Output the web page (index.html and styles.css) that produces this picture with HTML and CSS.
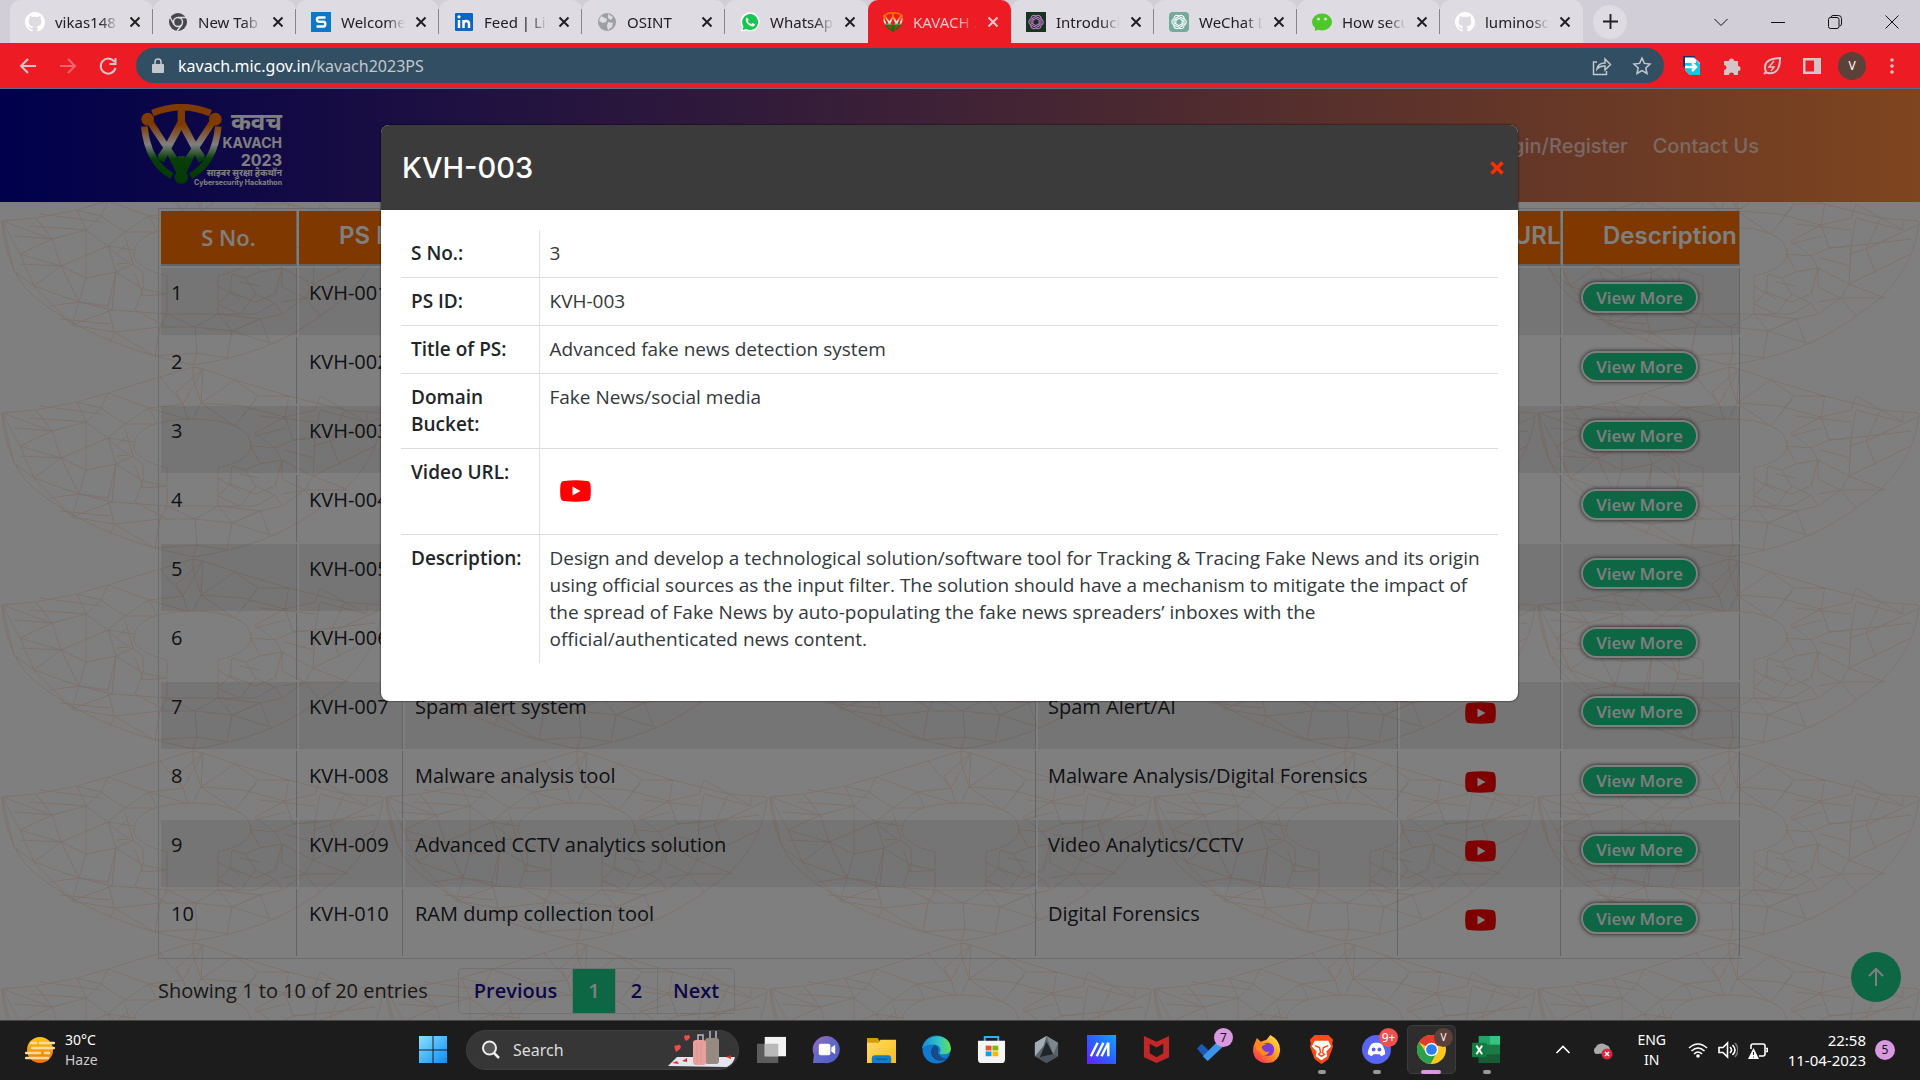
FILE: index.html
```html
<!DOCTYPE html>
<html lang="en">
<head>
<meta charset="utf-8">
<title>KAVACH 2023</title>
<link rel="stylesheet" href="styles.css">
</head>
<body>
<svg class="defs" aria-hidden="true">
  <defs>
    <symbol id="x" viewBox="0 0 12 12"><path d="M1.500 1.500 10.500 10.500M10.500 1.500 1.500 10.500" stroke="currentColor" stroke-width="2" fill="none"/></symbol>
    <symbol id="github" viewBox="0 0 16 16"><path fill="#fff" d="M8 0C3.580 0 0 3.580 0 8c0 3.540 2.290 6.530 5.470 7.590.4.070.55-.17.55-.38 0-.19-.01-.82-.01-1.490-2.010.37-2.530-.49-2.690-.94-.09-.23-.48-.94-.82-1.130-.28-.15-.68-.52-.01-.53.63-.01 1.080.58 1.230.82.72 1.210 1.870.87 2.330.66.070-.52.28-.87.51-1.070-1.780-.2-3.640-.89-3.640-3.950 0-.87.31-1.590.82-2.150-.08-.2-.36-1.020.08-2.120 0 0 .67-.21 2.200.82.64-.18 1.320-.27 2-.27s1.360.09 2 .27c1.530-1.040 2.200-.82 2.200-.82.44 1.100.16 1.920.08 2.120.51.56.82 1.270.82 2.150 0 3.070-1.870 3.750-3.650 3.950.29.25.54.73.54 1.480 0 1.070-.01 1.930-.01 2.200 0 .21.15.46.55.38A8 8 0 0 0 16 8c0-4.420-3.580-8-8-8z"/></symbol>
    <symbol id="knot" viewBox="0 0 20 20"><g fill="none" stroke="currentColor" stroke-width="1.2"><path id="k" d="M10 3C6.500 1.500 4 4 4.500 6.500V11L10 14"/><use href="#k" transform="rotate(60 10 10)"/><use href="#k" transform="rotate(120 10 10)"/><use href="#k" transform="rotate(180 10 10)"/><use href="#k" transform="rotate(240 10 10)"/><use href="#k" transform="rotate(300 10 10)"/></g></symbol>
    <symbol id="yt" viewBox="0 0 31 22"><path d="M4 1Q15.500-.5 27 1q3 0 3.500 4 .7 6 0 12-.5 4-3.500 4-11.500 1.500-23 0-3 0-3.500-4-.7-6 0-12Q1 1 4 1z" fill="red"/><path d="M12.500 6.500v9l8-4.500z" fill="#fff"/></symbol>
    <linearGradient id="tri" gradientUnits="userSpaceOnUse" x1="0" y1="45" x2="0" y2="285"><stop offset=".25" stop-color="#ff7400"/><stop offset=".5" stop-color="#fff"/><stop offset=".68" stop-color="#107c10"/><stop offset="1" stop-color="#087008"/></linearGradient>
    <symbol id="shield" viewBox="34 44 243 242"><g fill="none" stroke="url(#tri)" stroke-width="20"><path d="M68 71Q155 35 243 71"/><path d="M44 111Q55 220 127 259M266 111Q255 220 183 259"/><path d="M58 93 155 240 252 93"/><path d="M155 55V108M155 98 93 214M155 98 217 214M93 205 120 165M217 205 190 165" stroke-width="22"/><path d="M124 195 155 258 186 195M155 200V262"/></g><g fill="url(#tri)"><circle cx="54" cy="89" r="19"/><circle cx="257" cy="89" r="19"/><circle cx="155" cy="263" r="20"/></g></symbol>
    <linearGradient id="sky" x1="0" y1="0" x2="1" y2="1"><stop stop-color="#8ae2ff"/><stop offset="1" stop-color="#0a8cf8"/></linearGradient>
    <linearGradient id="edge1" x1="0" y1="0" x2="1" y2="0"><stop stop-color="#1689d8"/><stop offset=".6" stop-color="#31c8c5"/><stop offset="1" stop-color="#66dd4a"/></linearGradient>
    <linearGradient id="indigo" x1="0" y1="1" x2="1" y2="0"><stop stop-color="#6a20ff"/><stop offset=".5" stop-color="#2c5fff"/><stop offset="1" stop-color="#14a4ff"/></linearGradient>
    <linearGradient id="sun" x1="0" y1="0" x2="0" y2="1"><stop stop-color="#ffc614"/><stop offset="1" stop-color="#f0700c"/></linearGradient>
    <linearGradient id="fire" x1="1" y1="0" x2="0" y2="1"><stop stop-color="#fff04a"/><stop offset=".45" stop-color="#ff9a20"/><stop offset="1" stop-color="#ff1a60"/></linearGradient>
    <linearGradient id="folder" x1="0" y1="0" x2="1" y2="1"><stop stop-color="#ffdc68"/><stop offset="1" stop-color="#fbbc14"/></linearGradient>
    <linearGradient id="chat" x1="0" y1="0" x2="1" y2="1"><stop stop-color="#9a68b8"/><stop offset=".5" stop-color="#6068c8"/><stop offset="1" stop-color="#5058c8"/></linearGradient>
    <pattern id="mesh" width="384" height="192" patternUnits="userSpaceOnUse" patternTransform="translate(0 85)">
      <g fill="none" stroke="#fde2d7" stroke-width="1">
        <path d="M2 47 36 44 77 36 108 27 160 11 193 1 203 3 235 14 289 30 345 44 382 47M2 47Q6 95 31 120 90 170 193 191 270 180 320 142 378 105 383 47"/>
        <path d="M167 102Q134 94 134 80 136 54 192 53 250 54 251 80 251 94 218 102V140H167zM193 1V12L201 37"/>
        <path d="M36 44 52 65 86 56 77 36 101 42 108 27 149 42 125 58 101 42 86 56 108 72 125 58 157 58 149 42M2 47 52 65 20 80zM52 65 61 92 20 80 34 112 61 92 108 72 116 98 133 90 125 62M86 56V104L61 92 79 128 86 104 116 98 108 132 79 128 34 112 72 151 79 128 112 136 72 151 114 158 110 169M108 132 114 158 160 153 167 140 112 136 116 98 143 115 135 136M133 90 143 98V115L167 120M114 158 155 182 160 153 195 153 167 140M195 153 218 140 232 157 195 153 197 179 155 182M232 157 227 184 197 179 193 191M232 157 270 169 260 145 232 157 260 145 218 140"/>
        <path d="M160 11 183 38 176 26 203 3 201 37 193 53M183 38 149 42 176 50 188 54 183 38 203 3M201 37 235 14 258 30 289 30 285 51 243 40 201 37 235 60 258 30 243 50M285 51 315 44 320 30 345 44 367 56V47M285 51 293 74 315 72 320 44 367 56M293 74 275 82 251 80M293 74 315 72 313 110 282 94 275 82 255 67 285 51M313 110 305 124 282 113 282 94M305 124 348 124 313 110 375 80M345 44 330 75 384 50M315 72 375 65M251 80 260 98 245 104 232 100 230 118 218 130 240 140 256 120 245 104M230 118 256 128 275 120 282 94 260 98M218 140 256 140 275 129 256 120M275 129 282 140 260 145M282 140 305 124 320 142M2 47 14 97 34 112M30 52 86 56M40 40 101 48M125 72 116 80 108 72 134 76M116 80 130 89 116 90M61 92 20 90M52 65 14 62M79 128 50 132M110 150 60 145M135 136 167 153M167 120 143 122 135 100M260 50 315 56M285 62 255 70M285 84 313 92M240 108 260 112M218 112 240 125M305 124 282 128M313 80 330 75 340 100"/>
      </g>
    </pattern>
  </defs>
</svg>

<header class="browser">
  <div class="tabs">
    <div class="tab"><svg class="fav"><use href="#github"/></svg><span class="tab-title">vikas148 (Vikas)</span><button class="tab-x" aria-label="Close tab"><svg><use href="#x"/></svg></button></div>
    <div class="tab"><svg class="fav" viewBox="0 0 20 20"><circle cx="10" cy="10" r="9" fill="#45474a"/><circle cx="10" cy="10" r="4.500" fill="#45474a" stroke="#dfdbe2" stroke-width="1.500"/><path d="M10 5.500h9M6 12.500 2 5M14 12.500 9 19" stroke="#dfdbe2" stroke-width="1.500"/></svg><span class="tab-title">New Tab</span><button class="tab-x" aria-label="Close tab"><svg><use href="#x"/></svg></button></div>
    <div class="tab"><svg class="fav" viewBox="0 0 20 20"><path fill="#0b78c8" d="M0 0h20v20H0z"/><path d="M14.500 5.500H8Q6 5.500 6 7.500T8 9.700H12.500Q14.300 9.700 14.300 12T12.500 14.500H5.500" fill="none" stroke="#fff" stroke-width="2.500"/></svg><span class="tab-title">Welcome to</span><button class="tab-x" aria-label="Close tab"><svg><use href="#x"/></svg></button></div>
    <div class="tab"><svg class="fav" viewBox="0 0 20 20"><rect x="1" y="1" width="18" height="18" rx="1" fill="#0a66c2"/><path d="M5 8v8M9.500 16V8M9.500 12q0-3 2.700-3T15 12v4" fill="none" stroke="#fff" stroke-width="2.500"/><circle cx="5" cy="4.800" r="1.600" fill="#fff"/></svg><span class="tab-title">Feed | LinkedIn</span><button class="tab-x" aria-label="Close tab"><svg><use href="#x"/></svg></button></div>
    <div class="tab"><svg class="fav" viewBox="0 0 20 20"><circle cx="10" cy="10" r="9" fill="#9ba0a5"/><path d="M4 4l6 3-1 3-3 1-4-2zM11 10l5 1-1 4-4 3-1-4zM11 2l5 3-2 3-3-2z" fill="#dfdbe2"/></svg><span class="tab-title">OSINT</span><button class="tab-x" aria-label="Close tab"><svg><use href="#x"/></svg></button></div>
    <div class="tab last-before"><svg class="fav" viewBox="0 0 20 20"><path d="M1 19.500 2.200 15A9.500 9.500 0 1 1 6 18.300z" fill="#fff"/><path d="M2.500 18 3.500 14.500A8 8 0 1 1 6.200 17z" fill="#16c653"/><path d="M7 5.500C4 7 7 14 12.500 14.500c2 0 2.500-1.500 2.200-2.500L12.300 11l-1.200 1.200Q8.500 11 7.800 9L8.800 8z" fill="#fff"/></svg><span class="tab-title">WhatsApp Web</span><button class="tab-x" aria-label="Close tab"><svg><use href="#x"/></svg></button></div>
    <div class="tab active"><svg class="fav"><use href="#shield"/></svg><span class="tab-title">KAVACH 2023</span><button class="tab-x" aria-label="Close tab"><svg><use href="#x"/></svg></button></div>
    <div class="tab after"><svg class="fav knot-dark" viewBox="0 0 20 20"><path fill="#17341c" d="M0 0h20v20H0z"/><use href="#knot" x="1" y="1" width="18" height="18"/></svg><span class="tab-title">Introducing</span><button class="tab-x" aria-label="Close tab"><svg><use href="#x"/></svg></button></div>
    <div class="tab"><svg class="fav knot-green" viewBox="0 0 20 20"><rect fill="#74aa9c" width="20" height="20" rx="4"/><use href="#knot" x="1" y="1" width="18" height="18"/></svg><span class="tab-title">WeChat Data</span><button class="tab-x" aria-label="Close tab"><svg><use href="#x"/></svg></button></div>
    <div class="tab"><svg class="fav" viewBox="0 0 20 20"><ellipse cx="10" cy="10" rx="10" ry="8.500" fill="#4fc62c"/><path d="M3 14v5l5-2z" fill="#4fc62c"/><circle cx="6.500" cy="7" r="1.500" fill="#dfdbe2"/><circle cx="13.500" cy="7" r="1.500" fill="#dfdbe2"/></svg><span class="tab-title">How secure is</span><button class="tab-x" aria-label="Close tab"><svg><use href="#x"/></svg></button></div>
    <div class="tab last-before"><svg class="fav"><use href="#github"/></svg><span class="tab-title">luminoso/osint</span><button class="tab-x" aria-label="Close tab"><svg><use href="#x"/></svg></button></div>
    <button class="new-tab" aria-label="New tab"><svg viewBox="0 0 16 16"><path d="M8 0v16M0 8h16" stroke="#202124" stroke-width="2"/></svg></button>
    <div class="window-buttons">
      <button aria-label="Search tabs"><svg viewBox="0 0 14 14"><path d="M0.500 4 7 10.500 13.500 4"/></svg></button>
      <button aria-label="Minimize"><svg viewBox="0 0 14 14"><path d="M0 7.500h14"/></svg></button>
      <button aria-label="Restore"><svg viewBox="0 0 14 14"><rect x=".5" y="2.500" width="10.500" height="11" rx="2"/><path d="M3 2.500q0-2 2-2h5.500q3 0 3 3V9q0 2-2 2"/></svg></button>
      <button aria-label="Close"><svg viewBox="0 0 14 14"><path d="M.5.5l13 13M13.500.5l-13 13"/></svg></button>
    </div>
  </div>
  <div class="toolbar">
    <button class="tool" aria-label="Back"><svg viewBox="0 0 20 20"><path d="M18 10H3M10 3 3 10l7 7" class="line"/></svg></button>
    <button class="tool dim" aria-label="Forward"><svg viewBox="0 0 20 20"><path d="M2 10h15M10 3l7 7-7 7" class="line"/></svg></button>
    <button class="tool" aria-label="Reload"><svg viewBox="0 0 20 20"><path d="M16.500 6A7.500 7.500 0 1 0 17.500 12M17.500 2v6h-6" class="line"/></svg></button>
    <div class="omnibox">
      <svg class="lock" viewBox="0 0 12 16"><rect y="6" width="12" height="9" rx="1"/><path d="M3 7V4a3 3 0 0 1 6 0v3" fill="none" stroke="currentColor" stroke-width="1.500"/></svg>
      <span class="url"><b>kavach.mic.gov.in</b>/kavach2023PS</span>
      <button class="tool" aria-label="Share"><svg viewBox="0 0 20 20"><path d="M5 6H1.500v12.500h13V15M5 13q1-6 8-6V3l5.500 5.500L13 14v-4q-5-.5-8 3z" class="line thin"/></svg></button>
      <button class="tool" aria-label="Bookmark"><svg viewBox="0 0 20 20"><path d="M10 2l2.400 5.400 5.600.6-4.200 3.900L15 17.500l-5-3-5 3 1.200-5.600L2 8l5.600-.6z" class="line thin"/></svg></button>
    </div>
    <button class="tool" aria-label="Extension"><svg viewBox="0 0 20 20"><path d="M1 0h12v14H5L1 10z" fill="#12376a"/><path d="M3 1.500h9L18 7v12H8l-5-5z" fill="#fff"/><path d="M3 7H14V4l4 4v11H8l-5-5z" fill="#10c4ea"/><path d="M3 11h11M10 7l4 4-4 4" stroke="#fff" stroke-width="2.500" fill="none"/></svg></button>
    <button class="tool" aria-label="Extensions"><svg viewBox="0 0 20 20"><path d="M2 5h5a2.500 2.500 0 1 1 5 0h4v5a2.500 2.500 0 1 1 0 5v4h-4a2.500 2.500 0 0 0-5 0H2v-5a2.500 2.500 0 0 0 0-5z" fill="currentColor"/></svg></button>
    <button class="tool" aria-label="Energy saver"><svg viewBox="0 0 20 20"><path d="M2 18 4 16Q-1 3 18 2q0 17-12 15-1 0-2-1" class="line"/><path d="M12 5l-5 6h5l-3 4" class="line thin"/></svg></button>
    <button class="tool" aria-label="Side panel"><svg viewBox="0 0 20 20"><path d="M1 2h18v16H1zM3.500 4.500v11H12v-11z" fill="currentColor" fill-rule="evenodd"/></svg></button>
    <button class="tool" aria-label="Profile"><span class="avatar">V</span></button>
    <button class="tool" aria-label="Menu"><svg viewBox="0 0 20 20" fill="currentColor"><circle cx="10" cy="4" r="1.800"/><circle cx="10" cy="10" r="1.800"/><circle cx="10" cy="16" r="1.800"/></svg></button>
  </div>
</header>

<div class="viewport">
  <svg class="mesh" aria-hidden="true"><rect width="100%" height="100%" fill="url(#mesh)"/></svg>
  <div class="site">
    <div class="site-head">
      <div class="logo">
        <svg><use href="#shield"/></svg>
        <div class="logo-text">
          <span class="hi-big">कवच</span><span class="name">KAVACH</span><span class="year">2023</span><span class="hi-small">साइबर सुरक्षा हैकथॉन</span><span class="sub">Cybersecurity Hackathon</span>
        </div>
      </div>
      <nav><a href="#login">Login/Register</a><a href="#contact">Contact Us</a></nav>
    </div>
    <main>
      <table class="list">
        <colgroup><col class="c1"><col class="c2"><col><col class="c4"><col class="c5"><col class="c6"></colgroup>
        <thead><tr><th class="first">S No.</th><th>PS ID</th><th>Title of PS</th><th>Domain Bucket</th><th>Video URL</th><th>Description</th></tr></thead>
        <tbody>
          <tr><td>1</td><td>KVH-001</td><td></td><td></td><td></td><td><button class="more">View More</button></td></tr>
          <tr><td>2</td><td>KVH-002</td><td></td><td></td><td></td><td><button class="more">View More</button></td></tr>
          <tr><td>3</td><td>KVH-003</td><td></td><td></td><td></td><td><button class="more">View More</button></td></tr>
          <tr><td>4</td><td>KVH-004</td><td></td><td></td><td></td><td><button class="more">View More</button></td></tr>
          <tr><td>5</td><td>KVH-005</td><td></td><td></td><td></td><td><button class="more">View More</button></td></tr>
          <tr><td>6</td><td>KVH-006</td><td></td><td></td><td></td><td><button class="more">View More</button></td></tr>
          <tr><td>7</td><td>KVH-007</td><td>Spam alert system</td><td>Spam Alert/AI</td><td><a class="video" href="#v7" aria-label="Video"><svg><use href="#yt"/></svg></a></td><td><button class="more">View More</button></td></tr>
          <tr><td>8</td><td>KVH-008</td><td>Malware analysis tool</td><td>Malware Analysis/Digital Forensics</td><td><a class="video" href="#v8" aria-label="Video"><svg><use href="#yt"/></svg></a></td><td><button class="more">View More</button></td></tr>
          <tr><td>9</td><td>KVH-009</td><td>Advanced CCTV analytics solution</td><td>Video Analytics/CCTV</td><td><a class="video" href="#v9" aria-label="Video"><svg><use href="#yt"/></svg></a></td><td><button class="more">View More</button></td></tr>
          <tr><td>10</td><td>KVH-010</td><td>RAM dump collection tool</td><td>Digital Forensics</td><td><a class="video" href="#v10" aria-label="Video"><svg><use href="#yt"/></svg></a></td><td><button class="more">View More</button></td></tr>
        </tbody>
      </table>
      <div class="pager">
        <span>Showing 1 to 10 of 20 entries</span>
        <div class="pages"><a href="#prev">Previous</a><a href="#p1" class="on">1</a><a href="#p2">2</a><a href="#next">Next</a></div>
      </div>
    </main>
    <button class="to-top" aria-label="Back to top"><svg viewBox="0 0 20 20"><path d="M10 19V2M3 9l7-7 7 7" fill="none" stroke="#fff" stroke-width="2"/></svg></button>
  </div>
  <div class="backdrop">
    <section class="modal" role="dialog" aria-labelledby="modal-title">
      <div class="modal-head"><h4 id="modal-title">KVH-003</h4><button aria-label="Close"><svg viewBox="0 0 14 14"><path d="M1.500 1.500l11 11M12.500 1.500l-11 11" stroke="#ff2d00" stroke-width="3.500"/></svg></button></div>
      <table class="details">
        <tr><th scope="row">S No.:</th><td>3</td></tr>
        <tr><th scope="row">PS ID:</th><td>KVH-003</td></tr>
        <tr><th scope="row">Title of PS:</th><td>Advanced fake news detection system</td></tr>
        <tr><th scope="row">Domain Bucket:</th><td>Fake News/social media</td></tr>
        <tr><th scope="row">Video URL:</th><td><a class="video" href="#v3" aria-label="Video"><svg><use href="#yt"/></svg></a></td></tr>
        <tr><th scope="row">Description:</th><td>Design and develop a technological solution/software tool for Tracking &amp; Tracing Fake News and its origin using official sources as the input filter. The solution should have a mechanism to mitigate the impact of the spread of Fake News by auto-populating the fake news spreaders’ inboxes with the official/authenticated news content.</td></tr>
      </table>
    </section>
  </div>
</div>

<footer class="taskbar">
  <div class="weather">
    <svg viewBox="0 0 30 30"><circle cx="15" cy="15" r="13" fill="url(#sun)"/><path d="M6 8h5M15 8h14M7 13h22M1 18h14M20 18h4M1 23h22" stroke="#f6dca0" stroke-width="2.500" stroke-linecap="round"/></svg>
    <div><div>30°C</div><div class="soft">Haze</div></div>
  </div>
  <div class="apps">
    <button class="app" aria-label="Start"><svg viewBox="0 0 30 30"><path fill="url(#sky)" d="M0 1h14v14H0zM15 1h14v14H15zM0 16h14v13H0zM15 16h14v13H15z"/></svg></button>
    <div class="search">
      <svg viewBox="0 0 20 20"><circle cx="8.500" cy="8" r="6.500" fill="#555" stroke="#eee" stroke-width="2"/><path d="M13 13l5 5" stroke="#eee" stroke-width="2.500"/></svg>
      <input type="text" placeholder="Search" aria-label="Search">
      <svg class="bags" viewBox="0 0 70 39"><path d="M0 36 9 27H67Q66 33 59 37z" fill="#e6e4ee"/><path d="M4 33l5-2 2 3zM14 31l5-3v4zM58 27l5-2v4z" fill="#e03020"/><path d="M30 13V5h5v8M42 12V0h6v12" fill="none" stroke="#bbb6c8" stroke-width="1.500"/><rect x="37" y="8" width="14" height="26" rx="3" fill="#978a80"/><rect x="25" y="10" width="13" height="25" rx="3" fill="#e7a09c"/><path d="M29 13v20M33 13v20M42 11v20M46 11v20" stroke="#7773" /><path d="M8 15q-3 0 0 7 7-4 4-7-2-1-3 1zM18 5q-4 1 0 6 6-3 3-6-1-1-2 1z" fill="#f04a4a"/></svg>
    </div>
    <button class="app" aria-label="Task view"><svg viewBox="0 0 30 30"><path fill="#5c5c5c" d="M0 9h22v20H0z"/><path fill="#f2f2f2" d="M8 2h22v20H8z"/><path fill="#b9b9b9" d="M8 9h14v13H8z"/></svg></button>
    <button class="app" aria-label="Chat"><svg viewBox="0 0 30 30"><path d="M1 29l1-8A14 14 0 1 1 13 29z" fill="url(#chat)"/><rect x="7" y="9" width="12" height="12" rx="2" fill="#fff"/><path d="M20 13l4-3v10l-4-3z" fill="#fff"/></svg></button>
    <button class="app" aria-label="File Explorer"><svg viewBox="0 0 30 30"><path d="M0 3h11l2 3v5H0z" fill="#d79a08"/><path d="M0 8h12l2-3h16v24H0z" fill="url(#folder)"/><path d="M5 29v-5q0-3 3-3h14q3 0 3 3v5z" fill="#1180ca"/><path d="M9 25h12" stroke="#07518a"/></svg></button>
    <button class="app" aria-label="Edge"><svg viewBox="0 0 30 30"><circle cx="15" cy="15" r="14.500" fill="#0f7ad0"/><path d="M0 14C2-2 29-4 30 14q0 6-8 6-6 0-3-3 1-6-6-7Q5 9 0 14z" fill="url(#edge1)"/><path d="M13 10Q6 17 12 24q6 6 15 0-5 1-8-2-4-4-2-6 0-5-4-6z" fill="#164a88"/></svg></button>
    <button class="app" aria-label="Store"><svg viewBox="0 0 30 30"><path d="M8 8V2h14v6" fill="none" stroke="#25b4f4" stroke-width="2"/><path d="M1 6h28v19q0 4-4 4H5q-4 0-4-4z" fill="#f5f5f5"/><path fill="#f25022" d="M9 11h6v5H9z"/><path fill="#7fba00" d="M16 11h6v5h-6z"/><path fill="#00a4ef" d="M9 17h6v5H9z"/><path fill="#ffb900" d="M16 17h6v5h-6z"/></svg></button>
    <button class="app" aria-label="Armoury"><svg viewBox="0 0 30 30"><path d="M15 1l12 7v14l-12 7L3 22V8z" fill="#5c646b"/><path d="M15 1l12 7-5 12z" fill="#7d868e"/><path d="M3 22V8l12-7-3 10z" fill="#a5adb4"/><path d="M15 7l7 13-14 3z" fill="#20252a"/><path d="M3 22l5 1 14-3 5 2-12 7z" fill="#4a545c"/></svg></button>
    <button class="app" aria-label="MyASUS"><svg viewBox="0 0 30 30"><path d="M0 0h30v30H0z" fill="url(#indigo)"/><path d="M4 22 11 8M10 22 17 8M15 22 22 8v14" fill="none" stroke="#fff" stroke-width="2.500"/></svg></button>
    <button class="app" aria-label="McAfee"><svg viewBox="0 0 30 30"><path d="M2 1l13 6 13-6v22l-13 6L2 23zM8 9v10l7 4 7-4V9l-7 4z" fill="#c02828" fill-rule="evenodd"/></svg></button>
    <button class="app" aria-label="To Do"><svg viewBox="0 0 30 30"><path d="M0 14l5-5 12 12-6 6z" fill="#1c58b8"/><path d="M6 22 22 6l6 5-17 16z" fill="#3c94e8"/></svg><span class="badge pink">7</span></button>
    <button class="app" aria-label="Firefox"><svg viewBox="0 0 30 30"><path d="M3 8 5 3l4 4 6-2 4-5q11 6 10 17-2 12-14 12Q2 28 1 16q0-5 2-8z" fill="url(#fire)"/><circle cx="16" cy="15" r="7" fill="#7a3ad8"/><path d="M3 8q7-1 12 2-5 0-5 3 3 6 8 4Q14 24 8 19 3 14 3 8z" fill="#ff8a1c"/></svg></button>
    <button class="app" aria-label="Brave"><svg viewBox="0 0 30 30"><path d="M8 0h14l5 5-1 4 1 3-5 13-7 5-7-5L3 12l1-3-1-4z" fill="#ff4a16"/><path d="M8 6h14l3 6-5 5 1 5-6 4-6-4 1-5-5-5z" fill="#fff"/><path d="M8 11l5 2 1 5-2 2 3 2 3-2-2-2 1-5 5-2" fill="none" stroke="#ff4a16" stroke-width="1.500"/></svg><i class="run"></i></button>
    <button class="app" aria-label="Discord"><svg viewBox="0 0 30 30"><circle cx="15" cy="15" r="15" fill="#5865f2"/><path d="M10 9l3-1h4l3 1q4 5 4 11l-4 2-2-2h-6l-2 2-4-2q0-6 4-11z" fill="#fff"/><circle cx="12" cy="15" r="2" fill="#5865f2"/><circle cx="18" cy="15" r="2" fill="#5865f2"/></svg><span class="badge red">9+</span><i class="run"></i></button>
    <button class="app current" aria-label="Chrome"><svg viewBox="0 0 30 30"><circle cx="15" cy="15" r="15" fill="#fcc81e"/><path d="M15 15 2 7.500A15 15 0 0 1 28 7.500z" fill="#e33b2e"/><path d="M2 7.500A15 15 0 0 0 14 30l6-11-10 0z" fill="#2aa24c"/><circle cx="15" cy="15" r="7" fill="#fff"/><circle cx="15" cy="15" r="5.500" fill="#2b7ff0"/></svg><span class="badge brown">V</span><i class="run wide"></i></button>
    <button class="app" aria-label="Excel"><svg viewBox="0 0 30 30"><path fill="#1c7a46" d="M7 1h22v28H7z"/><path fill="#35c481" d="M18 1h11v9H18z"/><path fill="#21a366" d="M7 1h11v9H7z"/><path fill="#185c37" d="M7 20h22v9H7z"/><rect y="8" width="15" height="15" rx="1" fill="#107c41"/><path d="M4.500 11l6 9M10.500 11l-6 9" stroke="#fff" stroke-width="2"/></svg><i class="run"></i></button>
  </div>
  <div class="tray">
    <svg viewBox="0 0 20 20"><path d="M3.500 13 10 6.500l6.500 6.500" class="tl"/></svg>
    <svg viewBox="0 0 20 20"><path d="M3 14a4 4 0 0 1 0-7 6 5 0 0 1 10-2 5 5 0 0 1 3 8z" fill="#aaa"/><circle cx="14" cy="14" r="5.500" fill="#d8283c"/><path d="M12 12l4 4M16 12l-4 4" stroke="#fff" stroke-width="1.500"/></svg>
    <div class="lang">ENG<br>IN</div>
    <div class="status">
      <svg viewBox="0 0 20 20"><path d="M1 8q9-8 18 0M3.500 11q6.500-6 13 0M6 14q4-4 8 0" class="tl"/><circle cx="10" cy="16" r="1.800" fill="#fff"/></svg>
      <svg viewBox="0 0 20 20"><path d="M1 7.500h4L9.500 3v14L5 12.500H1zM12 7q3 3 0 6M14.500 5q5 5 0 10" class="tl"/><path d="M17 3q6 7 0 14" class="tl faint"/></svg>
      <svg viewBox="0 0 20 20"><path d="M3 9V6q0-2 2-2h10q2 0 2 2v8q0 2-2 2h-4M18 8.500h1.500v3H18" class="tl"/><path d="M5.500 8 11 19H0z" fill="#fff"/><path d="M5.500 12v3M5.500 16.500v1" stroke="#1c1c1c"/></svg>
    </div>
    <div class="clock">22:58<br>11-04-2023</div>
    <span class="notes">5</span>
  </div>
</footer>
</body>
</html>
```
FILE: styles.css
```css
* { box-sizing: border-box; }
body {
  margin: 0;
  min-height: 100vh;
  display: flex;
  flex-direction: column;
  font-family: "Open Sans", "Noto Sans", sans-serif;
  color: #212529;
}
button { border: 0; padding: 0; background: none; font: inherit; color: inherit; }
a { color: inherit; text-decoration: none; }
svg { display: block; flex: none; }
.defs { position: absolute; width: 0; height: 0; }

/* Browser frame */
.browser { font-family: "Noto Sans", sans-serif; background: #ed1c24; border-bottom: 1px solid #56708a; }
.tabs { display: flex; align-items: center; height: 43px; padding-left: 10px; background: #d1ced8; }
.tab {
  display: flex;
  align-items: center;
  flex: 0 1 143px;
  min-width: 0;
  height: 43px;
  padding: 0 12px 0 15px;
  border-radius: 10px 10px 0 0;
  background: linear-gradient(#85858c, #85858c) right center / 1px 25px no-repeat #dfdbe2;
  font-size: 15px;
  color: #202124;
}
.tab.last-before { background: #dfdbe2; }
.tab.active { background: #ed1c24; color: #f3c8cc; }
.fav { width: 20px; height: 20px; }
.knot-dark { color: #c07ad0; }
.knot-green { color: #fff; }
.tab-title {
  flex: 1;
  min-width: 0;
  margin: 0 10px;
  overflow: hidden;
  white-space: nowrap;
  mask-image: linear-gradient(90deg, #000 70%, transparent);
}
.tab-x svg { width: 12px; height: 12px; }
.new-tab { display: grid; place-items: center; flex: none; width: 34px; height: 34px; margin-left: 10px; border-radius: 50%; background: #dfdbe2; }
.new-tab svg { width: 15px; height: 15px; }
.window-buttons { display: flex; margin-left: auto; }
.window-buttons button { display: grid; place-items: center; width: 57px; height: 36px; }
.window-buttons svg { width: 14px; height: 14px; fill: none; stroke: #111; }
.toolbar { display: flex; align-items: center; height: 45px; padding: 0 8px; color: #d5c5c9; }
.tool { display: grid; place-items: center; width: 40px; height: 35px; flex: none; }
.tool svg { width: 20px; height: 20px; }
.dim { color: #f0666c; }
.line { fill: none; stroke: currentColor; stroke-width: 2; }
.thin { stroke-width: 1.5; }
.omnibox { display: flex; align-items: center; flex: 1; height: 35px; margin: 0 8px; padding: 0 2px 0 16px; border-radius: 18px; background: #324e62; color: #c3c8cc; }
.lock { width: 12px; height: 16px; fill: currentColor; }
.url { flex: 1; margin-left: 14px; font-size: 16px; }
.url b { font-weight: 400; color: #fff; }
.avatar { display: grid; place-items: center; width: 28px; height: 28px; border-radius: 50%; background: #5d4037; color: #fff; font-size: 12px; }

/* Web page */
.viewport { position: relative; flex: 1; overflow: hidden; background: #fff; }
.mesh { position: absolute; inset: 0; width: 100%; height: 100%; }
.site { position: relative; }
.site-head {
  display: flex;
  align-items: center;
  justify-content: space-between;
  height: 113px;
  padding: 0 161px 0 141px;
  background: linear-gradient(90deg, #000098, #fe8a3e);
}
.logo { display: grid; width: 141px; color: #fff; font-family: Inter, "Noto Sans", sans-serif; font-weight: 700; }
.logo > * { grid-area: 1 / 1; }
.logo svg { width: 81px; height: 81px; }
.logo-text { display: flex; flex-direction: column; align-items: flex-end; padding-top: 6px; white-space: nowrap; }
.hi-big { font-size: 24px; line-height: 24px; }
.name { font-size: 14px; line-height: 18px; }
.year { font-size: 16px; line-height: 16px; }
.hi-small { font-size: 9px; line-height: 10px; }
.sub { font-size: 7px; line-height: 10px; }
nav { display: flex; gap: 25px; font-family: Inter, sans-serif; font-size: 20px; font-weight: 500; color: #ffffffb0; }
main { padding: 6px 178px 6px 158px; }
.list {
  width: 100%;
  table-layout: fixed;
  border-collapse: separate;
  border-spacing: 2px;
  border: solid #d5dade;
  border-width: 1px 0 1px 1px;
  font-size: 20px;
  line-height: 27px;
}
.c1 { width: 136px; }
.c2 { width: 104px; }
.c4 { width: 360px; }
.c5 { width: 161px; }
.c6 { width: 177px; }
.list th {
  height: 55px;
  padding: 0 0 4px 40px;
  border-right: 1px solid #c5cad0;
  border-bottom: 2px solid #c5cad0;
  background: #ff7000;
  color: #fff;
  font-family: Inter, sans-serif;
  font-size: 24px;
  font-weight: 600;
  text-align: left;
  white-space: nowrap;
  overflow: hidden;
}
.list th.first { padding: 0; font-family: "Open Sans", sans-serif; font-size: 22px; text-align: center; }
.list td { height: 67px; padding: 11px 10px 9px; border-right: 1px solid #c5cad0; vertical-align: top; color: #212529; }
.list tbody tr:nth-child(odd) td { background: #00000014; }
.list .video { display: flex; justify-content: center; padding-top: 9px; }
.video svg { width: 31px; height: 22px; }
.more {
  display: block;
  width: 117px;
  height: 31px;
  margin: 3px 0 0 8px;
  border: 2px solid #fff;
  border-radius: 16px;
  background: #1acc88;
  color: #fff;
  font-size: 17px;
  font-weight: 600;
  line-height: 26px;
  white-space: nowrap;
  box-shadow: 0 0 4px #333;
}
.pager { display: flex; align-items: center; gap: 30px; padding-top: 9px; font-size: 20px; line-height: 44px; }
.pager > span { color: #333; }
.pages { display: flex; border: 1px solid #dee2e6; border-radius: 4px; color: #1a0f91; font-weight: 600; }
.pages a { padding: 0 15px; border-right: 1px solid #dee2e6; }
.pages a:last-child { border: 0; }
.pages .on { background: #1acc88; color: #fff; }
.to-top { position: absolute; right: 19px; top: 863px; display: grid; place-items: center; width: 50px; height: 50px; border-radius: 50%; background: #1acc88; }
.to-top svg { width: 20px; height: 20px; }

/* Dialog */
.backdrop { position: absolute; inset: 0; padding-top: 36px; background: #00000080; }
.modal { width: 1137px; max-width: 90%; margin: 0 402px 0 381px; padding-bottom: 38px; border-radius: 8px; background: #fff; overflow: hidden; box-shadow: 0 0 2px #000; }
.modal-head { display: flex; align-items: center; justify-content: space-between; height: 85px; margin-bottom: 20px; padding: 0 14px 0 21px; background: #3b3b3b; color: #fff; }
.modal-head h4 { margin: 0; font-family: Inter, sans-serif; font-size: 29px; font-weight: 500; }
.modal-head svg { width: 14px; height: 14px; }
.details { width: calc(100% - 40px); margin: 0 20px; border-collapse: collapse; font-size: 19px; line-height: 27px; color: #33383d; }
.details th { width: 138px; padding: 10px; border-right: 1px solid #dee2e6; color: #212529; font-weight: 600; text-align: left; vertical-align: top; }
.details td { padding: 10px; vertical-align: top; }
.details tr + tr { border-top: 1px solid #dcdcdc; }
.details .video { display: block; padding: 21px 10px 22px; }

/* Taskbar */
.taskbar {
  display: grid;
  grid-template-columns: 1fr auto 1fr;
  align-items: center;
  height: 60px;
  padding-bottom: 2px;
  border-top: 1px solid #454545;
  background: #1c1c1c;
  color: #fff;
  font-family: "Noto Sans", sans-serif;
  font-size: 14px;
  line-height: 20px;
}
.weather { display: flex; align-items: center; gap: 10px; padding-left: 25px; }
.weather svg { width: 30px; height: 30px; }
.soft { color: #ccc; }
.apps { display: flex; align-items: center; }
.app { position: relative; display: grid; place-items: center; width: 55px; height: 57px; }
.app > svg { width: 29px; height: 29px; }
.current > svg { z-index: 1; }
.current::before { content: ""; position: absolute; inset: 4px 3px; border: 1px solid #3c3c3c; border-radius: 5px; background: #2d2d2d; }
.search { display: flex; align-items: center; width: 273px; height: 40px; margin: 0 5px; padding-left: 14px; border: 1px solid #404040; border-radius: 20px; background: #363636; overflow: hidden; }
.search svg { width: 20px; height: 20px; }
.search input { flex: 1; min-width: 0; margin-left: 10px; border: 0; background: none; color: #ddd; font: 16px "Noto Sans", sans-serif; }
.search input::placeholder { color: #ddd; opacity: 1; }
.search .bags { width: 70px; height: 39px; }
.badge { position: absolute; z-index: 2; top: 7px; right: 6px; width: 19px; height: 19px; border-radius: 50%; font-size: 12px; line-height: 19px; text-align: center; }
.pink { background: #d998e0; color: #111; }
.red { background: #f0504f; }
.brown { background: #5d4037; font-size: 10px; }
.run { position: absolute; z-index: 1; bottom: 4px; left: 24px; width: 8px; height: 4px; border-radius: 2px; background: #999; }
.wide { left: 17px; width: 20px; background: #d998e0; }
.tray { display: flex; align-items: center; justify-content: flex-end; padding-right: 25px; }
.tray svg { width: 20px; height: 20px; }
.tray > svg + svg { margin-left: 20px; }
.lang { width: 34px; margin: 0 19px 0 22px; text-align: center; }
.status { display: flex; gap: 10px; }
.clock { margin-left: 20px; font-size: 15px; text-align: right; }
.tl { fill: none; stroke: #fff; stroke-width: 1.6; }
.faint { stroke: #777; }
.notes { width: 20px; height: 20px; margin-left: 9px; border-radius: 50%; background: #d998e0; color: #111; font-size: 12px; text-align: center; }
```
